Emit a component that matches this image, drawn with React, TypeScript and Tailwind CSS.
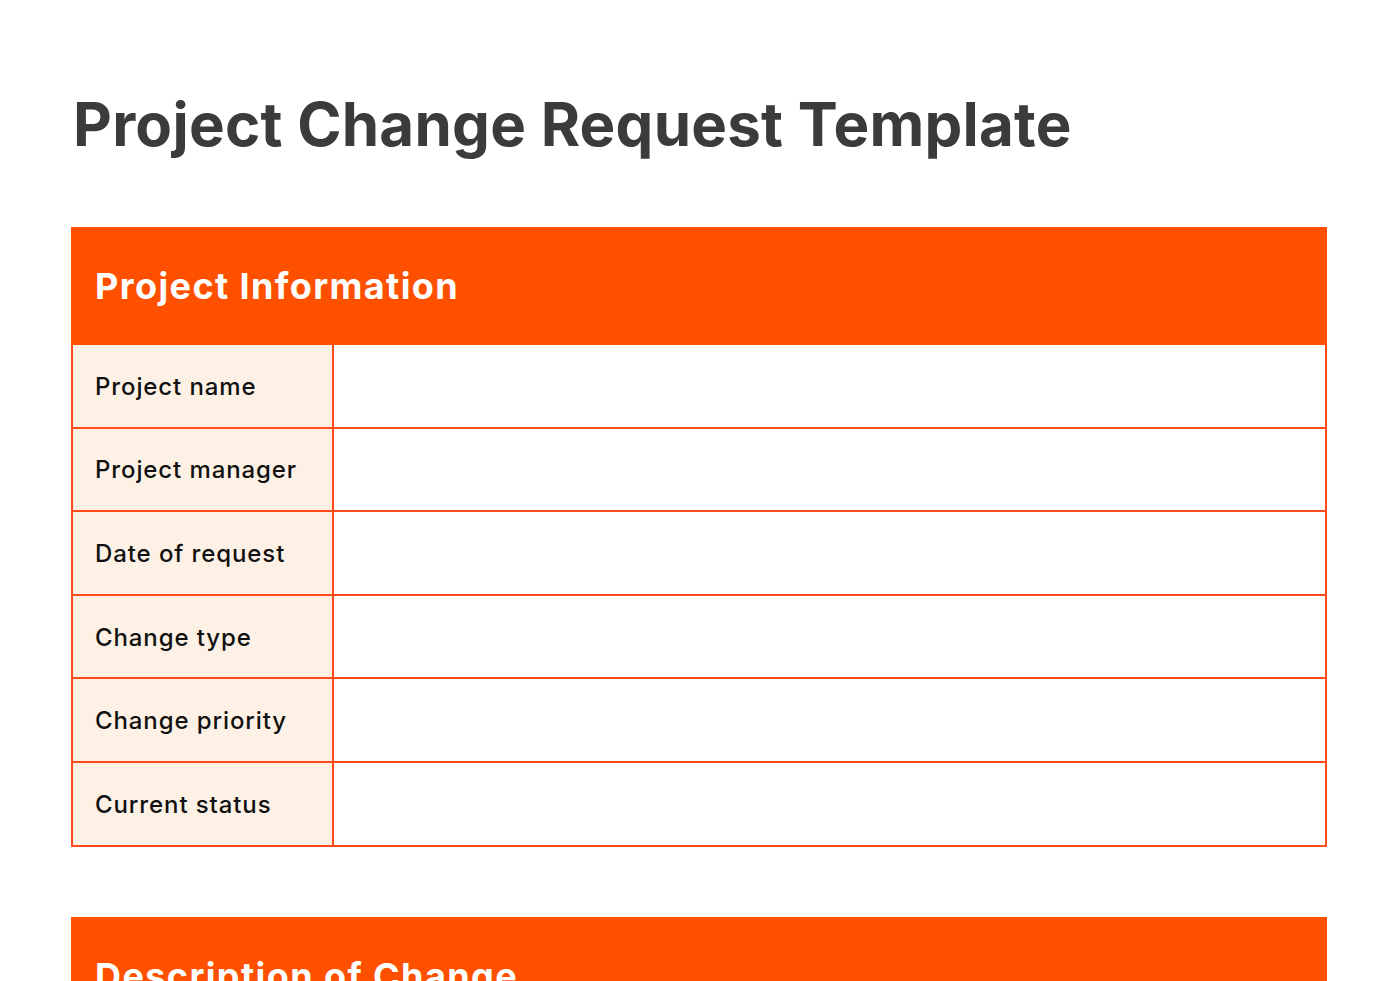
const ROWS = [
  "Project name",
  "Project manager",
  "Date of request",
  "Change type",
  "Change priority",
  "Current status",
];

function SectionHeader({ title }: { title: string }) {
  return (
    <div className="bg-[#ff5000] h-[118px] flex items-center px-6">
      <h2 className="text-white font-bold text-[36px] leading-none tracking-[1.4px]">{title}</h2>
    </div>
  );
}

export default function App() {
  return (
    <div className="min-h-screen bg-white font-['Inter','Noto_Sans',sans-serif] px-[71px] pt-[94px] pb-20 overflow-hidden h-[981px]">
      <h1 className="text-[#3b3b3b] font-bold text-[60px] leading-none pl-[2px] tracking-[0.25px]">
        Project Change Request Template
      </h1>

      {/* Project information */}
      <div className="mt-[73px] w-[1256px]">
        <SectionHeader title="Project Information" />
        <div className="border-x-2 border-[#ff4a1c]">
          {ROWS.map((label) => (
            <div key={label} className="flex h-[83.6px] border-b-2 border-[#ff4a1c]">
              <div className="w-[261px] bg-[#fdf1e5] border-r-2 border-[#ff4a1c] flex items-center pl-[22px] pt-[2px]">
                <span className="text-[24px] font-medium text-[#111] tracking-[0.9px]">{label}</span>
              </div>
              <div className="flex-1 bg-white" />
            </div>
          ))}
        </div>
      </div>

      {/* Description of change */}
      <div className="mt-[70px] w-[1256px]">
        <SectionHeader title="Description of Change" />
      </div>
    </div>
  );
}
